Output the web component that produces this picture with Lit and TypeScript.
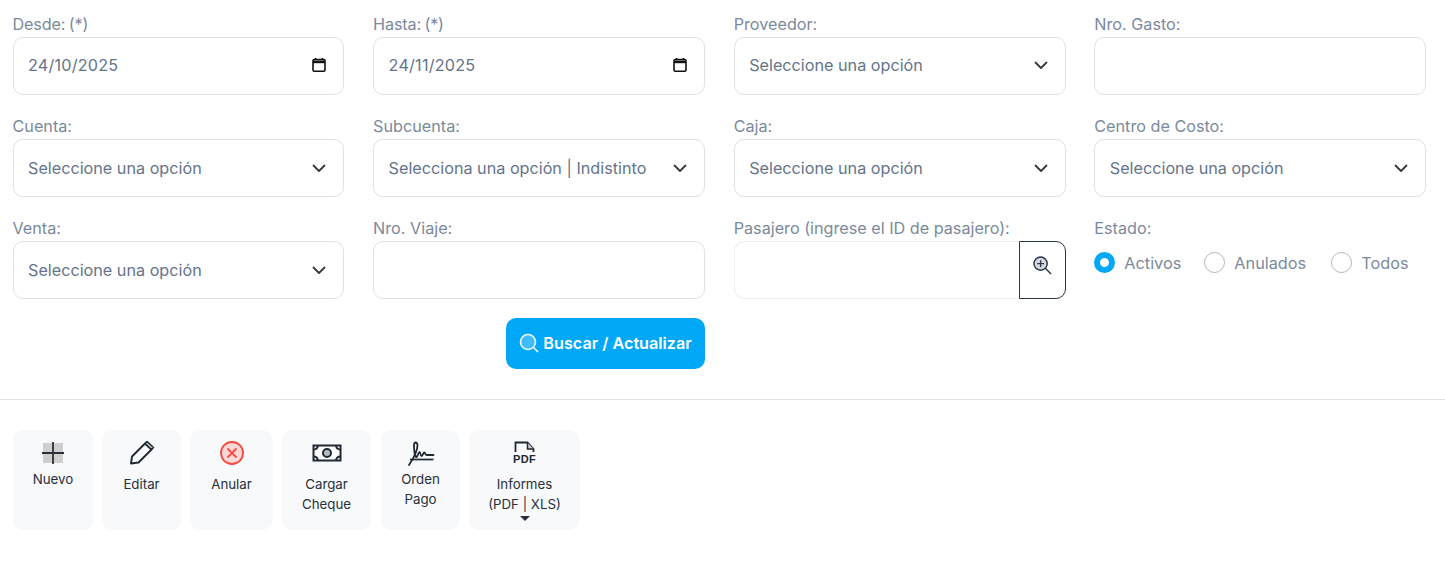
import { LitElement, html, css, svg } from "lit";
import { customElement } from "lit/decorators.js";

const chevron = html`<svg class="chev" width="16" height="16" viewBox="0 0 16 16" fill="none" stroke="#343a40" stroke-width="1.800" stroke-linecap="round" stroke-linejoin="round"><path d="M2.500 5.500L8 11l5.500-5.500"/></svg>`;
const calendar = html`<svg class="cal" width="16" height="16" viewBox="0 0 16 16" fill="none"><path d="M4.500 1v2M11.500 1v2" stroke="#111" stroke-width="1.600"/><rect x="2" y="2.600" width="12" height="11.600" rx="1.200" stroke="#111" stroke-width="1.600"/><path d="M2 5h12" stroke="#111" stroke-width="2.400"/></svg>`;

const icons: Record<string, unknown> = {
  plus: svg`<rect x="2" y="2" width="20" height="20" fill="#cfcfcf"/><path d="M12 1v22M1 12h22" stroke="#2b3138" stroke-width="1.800"/>`,
  pencil: svg`<path d="M1 22.500l1-7L15 2.500l6.500 6L8.500 21.500z" fill="none" stroke="#1f2933" stroke-width="1.900" stroke-linejoin="round"/><path d="M17 .5l6.500 6-2 2-6.500-6z" fill="#c9ced4" stroke="#1f2933" stroke-width="1.600" stroke-linejoin="round"/>`,
  cancel: svg`<circle cx="12" cy="12" r="11" fill="#f8d7d7" stroke="#f44a42" stroke-width="1.800"/><path d="M8 8l8 8M16 8l-8 8" stroke="#f44a42" stroke-width="1.800" stroke-linecap="round"/>`,
  money: svg`<rect x="-1.500" y="4.500" width="27" height="15" fill="#fff" stroke="#1f2933" stroke-width="2"/><circle cx="12" cy="12" r="4" fill="#b9bdc2" stroke="#1f2933" stroke-width="2"/><path d="M-1.500 8.500q4 0 4.500-4M25.500 8.500q-4 0-4.500-4M-1.500 15.500q4 0 4.500 4M25.500 15.500q-4 0-4.500 4" fill="none" stroke="#1f2933" stroke-width="2"/>`,
  sign: svg`<path d="M0 24C4 18 8.500 11 8.500 4.500 8.500 .5 5 .5 5 4.500c0 5 .5 9 2 11.500 1.500 1 2-4.500 3.500-5 1 0 .8 4 2 4 1.500 0 1.500-3.500 2.800-3.500 1 0 1 2.500 2.500 2.500H24.500" fill="none" stroke="#1f2933" stroke-width="1.800" stroke-linecap="round" stroke-linejoin="round"/><path d="M1 18.500h23.500" stroke="#1f2933" stroke-width="1.700"/>`,
  pdf: svg`<path d="M2.500 11V1.500h12l6 6.500v3" fill="none" stroke="#1f2933" stroke-width="1.800"/><path d="M14.500 1.500V8h6" fill="#c9ced4" stroke="#1f2933" stroke-width="1.500"/><text x="11.500" y="22" text-anchor="middle" font-family="'Liberation Sans',sans-serif" font-weight="700" font-size="11" fill="#1f2933" letter-spacing=".4">PDF</text>`,
};

@customElement("app-root")
export class AppRoot extends LitElement {
  static styles = css`
    :host { display: block; font-family: Inter, "Noto Sans", sans-serif; background: #fff; height: 581px; overflow: hidden; }
    .grid { display: grid; grid-template-columns: repeat(4, minmax(0, 1fr)); column-gap: 28.700px; row-gap: 14px; padding: 12px 18.800px 0 12.500px; }
    .field { display: flex; flex-direction: column; height: 88px; }
    label, .label { font-size: 16.200px; line-height: 25px; height: 25px; color: #7b8a9c; white-space: nowrap; }
    label.req { word-spacing: -1px; letter-spacing: -.15px; }
    .control { box-sizing: border-box; height: 58px; border: 1px solid #dde2e8; border-radius: 10px; display: flex; align-items: center; justify-content: space-between; padding: 0 16px 0 14.500px; font-size: 16.200px; color: #64748b; background: #fff; white-space: nowrap; }
    .control.up { padding-bottom: 2px; }
    .date-value { letter-spacing: .2px; }
    .group { display: flex; height: 58px; }
    .group .control { flex: 1; border-color: #eceef1; border-radius: 10px 0 0 10px; border-right: 0; }
    .zoom { box-sizing: border-box; width: 47px; height: 58px; border: 1px solid #2b3648; border-radius: 0 10px 10px 0; display: flex; justify-content: center; padding-top: 14px; }
    .radios { display: flex; align-items: center; height: 21px; margin-top: 11px; font-size: 16.300px; color: #7b8a9c; }
    .radio { display: flex; align-items: center; gap: 9px; margin-right: 23px; white-space: nowrap; }
    .radio:nth-child(2) { margin-right: 25px; }
    .dot { box-sizing: border-box; width: 21px; height: 21px; border-radius: 50%; border: 1px solid #b6b6b6; background: #fff; }
    .dot.on { border: 6px solid #00a8f7; }
    .actions { display: flex; justify-content: flex-start; padding: 14px 0 0 506px; }
    .search { box-sizing: border-box; width: 199px; height: 51px; padding-bottom: 2px; background: #00a8f7; border-radius: 10px; color: #fff; font-size: 16.200px; font-weight: 600; display: flex; align-items: center; justify-content: center; gap: 4px; white-space: nowrap; }
    hr { border: 0; border-top: 1px solid #dfe2e5; margin: 30px 0 30px; }
    .toolbar { display: flex; padding-left: 13px; gap: 9px; }
    .tool { box-sizing: border-box; height: 100px; background: #f8f9fb; border-radius: 10px; display: flex; flex-direction: column; align-items: center; font-size: 13.300px; line-height: 20px; color: #27303b; text-align: center; position: relative; white-space: nowrap; }
    .tool svg.ico { display: block; margin: 11px 0 9px; overflow: visible; }
    .tool.tight svg.ico { margin-bottom: 4px; }
    .tool.shift { margin-left: 1px; }
    .caret { position: absolute; left: 50%; bottom: 9px; margin-left: -5px; width: 0; height: 0; border: 5px solid transparent; border-top-color: #27303b; border-bottom: 0; }
  `;

  private sel(l: string, up = false, v = "Seleccione una opción") {
    return html`<div class="field"><label>${l}</label><div class="control ${up ? "up" : ""}"><span>${v}</span>${chevron}</div></div>`;
  }
  private date(l: string, v: string) {
    return html`<div class="field"><label class="req">${l}</label><div class="control up"><span class="date-value">${v}</span>${calendar}</div></div>`;
  }
  private text(l: string) {
    return html`<div class="field"><label>${l}</label><div class="control"></div></div>`;
  }
  private tool(icon: string, lines: string[], w: number, cls = "", caret = false) {
    return html`<div class="tool ${cls}" style="width:${w}px">
      <svg class="ico" width="24" height="24" viewBox="0 0 24 24">${icons[icon]}</svg>
      ${lines.map((t) => html`<div>${t}</div>`)}
      ${caret ? html`<span class="caret"></span>` : ""}
    </div>`;
  }

  render() {
    return html`
      <div class="grid">
        ${this.date("Desde: (*)", "24/10/2025")}
        ${this.date("Hasta: (*)", "24/11/2025")}
        ${this.sel("Proveedor:", true)}
        ${this.text("Nro. Gasto:")}
        ${this.sel("Cuenta:")}
        ${this.sel("Subcuenta:", false, "Selecciona una opción | Indistinto")}
        ${this.sel("Caja:")}
        ${this.sel("Centro de Costo:")}
        ${this.sel("Venta:")}
        ${this.text("Nro. Viaje:")}
        <div class="field"><label>Pasajero (ingrese el ID de pasajero):</label>
          <div class="group"><div class="control"></div>
            <div class="zoom"><svg width="19" height="19" viewBox="0 0 20 20" fill="none"><circle cx="8" cy="8" r="7" fill="#d3d8e0" stroke="#2b3648" stroke-width="1.500"/><path d="M8 4.500v7M4.500 8h7" stroke="#2b3648" stroke-width="1.300"/><path d="M13 13l6 6" stroke="#2b3648" stroke-width="1.500"/></svg></div>
          </div>
        </div>
        <div class="field"><span class="label">Estado:</span>
          <div class="radios">
            <div class="radio"><span class="dot on"></span>Activos</div>
            <div class="radio"><span class="dot"></span>Anulados</div>
            <div class="radio"><span class="dot"></span>Todos</div>
          </div>
        </div>
      </div>
      <div class="actions">
        <div class="search"><svg width="20" height="20" viewBox="0 0 20 20" fill="none"><circle cx="9" cy="9" r="7.500" fill="#3fbcfa" stroke="#f0faff" stroke-width="1.600"/><path d="M14.500 14.500L19 19" stroke="#f0faff" stroke-width="1.600"/></svg>Buscar / Actualizar</div>
      </div>
      <hr />
      <div class="toolbar">
        ${this.tool("plus", ["Nuevo"], 80, "tight")}
        ${this.tool("pencil", ["Editar"], 79)}
        ${this.tool("cancel", ["Anular"], 83)}
        ${this.tool("money", ["Cargar", "Cheque"], 89)}
        ${this.tool("sign", ["Orden", "Pago"], 79, "tight shift")}
        ${this.tool("pdf", ["Informes", "(PDF | XLS)"], 111, "", true)}
      </div>
    `;
  }
}
